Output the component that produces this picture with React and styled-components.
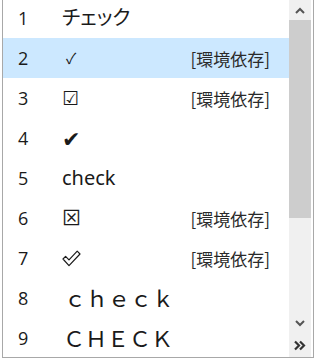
import React from 'react';
import styled, { createGlobalStyle } from 'styled-components';

const GlobalStyle = createGlobalStyle`
  html, body {
    margin: 0;
    padding: 0;
    background: #ffffff;
  }
  body {
    font-family: "Noto Sans", "Noto Sans CJK JP", sans-serif;
  }
`;

const rows = [
  { no: 1, text: 'チェック', size: 20, palt: true },
  { no: 2, text: '✓', size: 15, indent: 4, note: true, selected: true },
  { no: 3, text: '☑', size: 19, note: true },
  { no: 4, text: '✔', size: 22 },
  { no: 5, text: 'check', size: 20 },
  { no: 6, text: '⊠', size: 19, note: true },
  { no: 7, text: 'outline', note: true },
  { no: 8, text: 'ｃｈｅｃｋ', size: 22, indent: 2 },
  { no: 9, text: 'ＣＨＥＣＫ', size: 22, indent: 1 },
];

const OutlineCheck = () => (
  <svg width="19" height="17" viewBox="0 0 19 17">
    <path
      d="M1 9 L3.6 6.4 L7 9.8 L15.2 1.2 L18 4 L7 15.6 Z"
      fill="none"
      stroke="#1a1a1a"
      strokeWidth="1.2"
      strokeLinejoin="round"
    />
  </svg>
);

const Chevron = ({ up }) => (
  <svg width="10" height="7" viewBox="0 0 10 7">
    <path
      d={up ? 'M1 6 L5 2 L9 6' : 'M1 1 L5 5 L9 1'}
      fill="none"
      stroke="#555"
      strokeWidth="2"
    />
  </svg>
);

const DoubleChevron = () => (
  <svg width="12" height="11" viewBox="0 0 12 11">
    <path d="M1 1.5 L5 5.5 L1 9.5 M6 1.5 L10 5.5 L6 9.5" fill="none" stroke="#333" strokeWidth="2.2" />
  </svg>
);

const App = () => (
  <>
    <GlobalStyle />
    <Frame>
      <List>
        <Rows>
          {rows.map((r) => (
            <Row key={r.no} selected={r.selected}>
              <Num>{r.no}</Num>
              <Char size={r.size} indent={r.indent} palt={r.palt}>
                {r.text === 'outline' ? <OutlineCheck /> : r.text}
              </Char>
              {r.note && <Note>[環境依存]</Note>}
            </Row>
          ))}
        </Rows>
      </List>
      <Scrollbar>
        <ArrowBox>
          <Chevron up />
        </ArrowBox>
        <Thumb />
        <Track />
        <ArrowBox>
          <Chevron />
        </ArrowBox>
        <CornerBox>
          <DoubleChevron />
        </CornerBox>
      </Scrollbar>
    </Frame>
  </>
);

const Frame = styled.div`
  display: flex;
  width: 310px;
  height: 357px;
  margin-left: 2px;
  border-left: 1px solid #a8a8a8;
  border-right: 1px solid #a8a8a8;
  border-bottom: 1px solid #a8a8a8;
  background: #ffffff;
  overflow: hidden;
`;

const List = styled.div`
  flex: 1;
  overflow: hidden;
`;

const Rows = styled.div`
  margin-top: -2px;
`;

const Row = styled.div`
  display: flex;
  align-items: center;
  height: 40px;
  padding-right: 19px;
  background: ${(p) => (p.selected ? '#cce8ff' : 'transparent')};
  color: #1a1a1a;
`;

const Num = styled.span`
  width: 44px;
  padding-left: 15px;
  font-family: "Open Sans", "Noto Sans", sans-serif;
  font-size: 18px;
`;

const Char = styled.span`
  flex: 1;
  display: flex;
  align-items: center;
  padding-left: ${(p) => p.indent || 0}px;
  font-family: "Noto Sans", "Noto Sans CJK JP", "DejaVu Sans", sans-serif;
  font-size: ${(p) => p.size || 20}px;
  font-feature-settings: ${(p) => (p.palt ? '"palt"' : 'normal')};
  line-height: 1;
`;

const Note = styled.span`
  font-family: "Noto Sans CJK JP", sans-serif;
  font-size: 17px;
  color: #2a2a2a;
  font-feature-settings: "palt";
`;

const Scrollbar = styled.div`
  display: flex;
  flex-direction: column;
  width: 22px;
  margin-right: 2px;
  background: #f0f0f0;
`;

const ArrowBox = styled.div`
  display: flex;
  align-items: center;
  justify-content: center;
  height: 20px;
`;

const CornerBox = styled(ArrowBox)`
  height: 24px;
`;

const Thumb = styled.div`
  height: 198px;
  background: #cdcdcd;
`;

const Track = styled.div`
  flex: 1;
`;

export default App;
